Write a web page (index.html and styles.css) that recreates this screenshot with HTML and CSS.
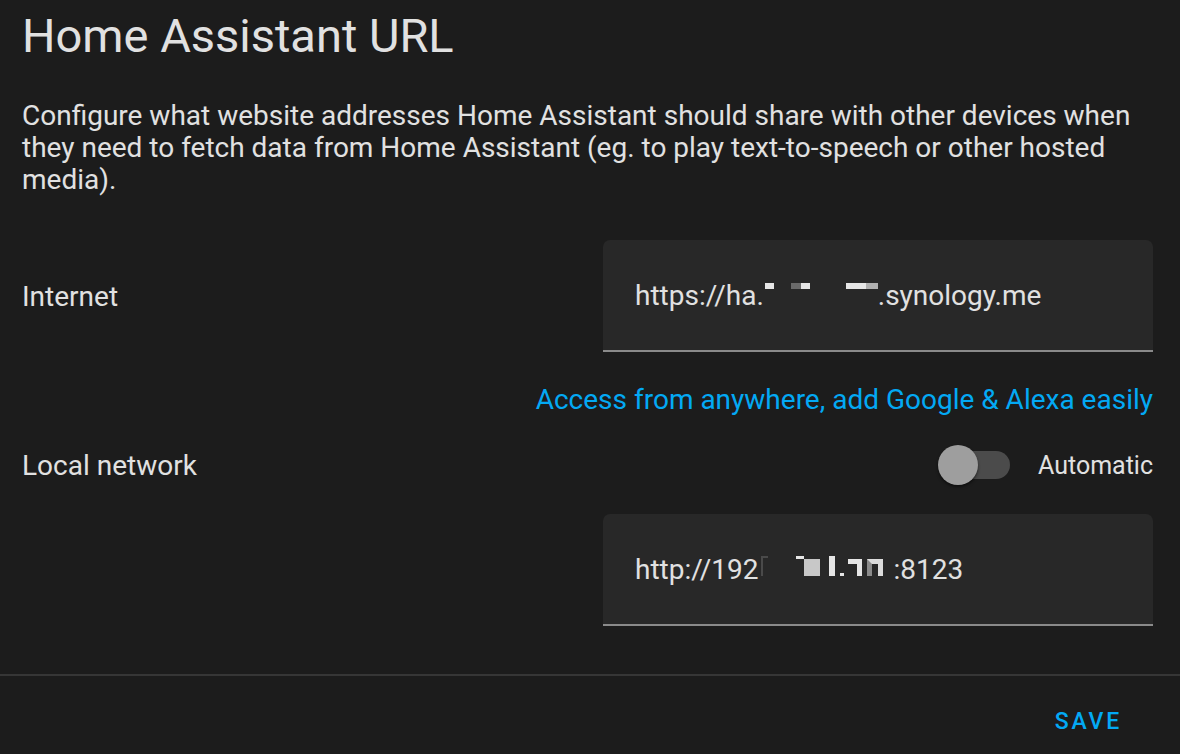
FILE: index.html
```html
<html>
<head>
    <title>Home Assistant URL</title>
    <link rel="stylesheet" href="styles.css">
</head>
<body>
    <div class="card">
        <div class="card-content">
            <h1>Home Assistant URL</h1>
            <p class="description">Configure what website addresses Home Assistant should share with other devices when they need to fetch data from Home Assistant (eg. to play text-to-speech or other hosted media).</p>

            <div class="row row-internet">
                <span class="label">Internet</span>
                <div class="field">
                    <span>https://ha.</span><span class="mask mask-external"><i class="px px-a"></i><i class="px px-b"></i><i class="px px-c"></i><i class="px px-d"></i><i class="px px-e"></i></span><span>.synology.me</span>
                </div>
            </div>

            <div class="link-line">
                <a class="cloud-link" href="#">Access from anywhere, add Google &amp; Alexa easily</a>
            </div>

            <div class="row row-local">
                <span class="label">Local network</span>
                <div class="auto">
                    <div class="switch">
                        <div class="track"></div>
                        <div class="thumb"></div>
                    </div>
                    <span class="auto-label">Automatic</span>
                </div>
            </div>

            <div class="row row-local-field">
                <div class="field">
                    <span>http://192</span><span class="mask mask-internal"><i class="px px-f"></i><i class="px px-g"></i><i class="px px-h"></i><i class="px px-i"></i><i class="px px-j"></i><i class="px px-k"></i><i class="px px-l"></i></span><span>:8123</span>
                </div>
            </div>
        </div>

        <div class="card-actions">
            <button class="save">Save</button>
        </div>
    </div>
</body>
</html>
```

FILE: styles.css
```css
body{
    margin: 0;
    background-color: #1c1c1c;
    font-family: Roboto, "Noto Sans", sans-serif;
    color: #e1e1e1;
}
.card{
    width: 1180px;
    height: 754px;
    display: flex;
    flex-direction: column;
}
.card-content{
    padding: 8px 27px 0 22px;
}
h1{
    margin: 0;
    font-size: 47px;
    font-weight: 400;
    line-height: 56px;
}
.description{
    margin: 36px 0 0;
    font-size: 28px;
    line-height: 32px;
}
.row{
    display: flex;
    justify-content: space-between;
    align-items: center;
}
.row-internet{
    margin-top: 44px;
}
.label{
    font-size: 28px;
}
.field{
    width: 550px;
    height: 112px;
    box-sizing: border-box;
    padding-left: 32px;
    display: flex;
    align-items: center;
    background-color: #282828;
    border-radius: 7px 7px 0 0;
    border-bottom: 2px solid #8a8a8a;
    font-size: 28px;
    white-space: pre;
}
.mask{
    position: relative;
    display: inline-block;
    height: 30px;
}
.mask-external{
    width: 114px;
}
.mask-internal{
    width: 135px;
}
.px{
    position: absolute;
    display: block;
}
.px-a{ left: 1px;  top: 3px; width: 9px;  height: 6px; background: #e6e6e6; }
.px-b{ left: 27px; top: 3px; width: 10px; height: 6px; background: #6a6a6a; }
.px-c{ left: 37px; top: 3px; width: 9px;  height: 6px; background: #e6e6e6; }
.px-d{ left: 82px; top: 3px; width: 20px; height: 6px; background: #e6e6e6; }
.px-e{ left: 102px; top: 3px; width: 12px; height: 6px; background: #b0b0b0; }
.px-f{ left: 2px;  top: 2px; width: 7px;  height: 20px; border-left: 2px solid #4a4a4a; border-top: 2px solid #4a4a4a; box-sizing: border-box; }
.px-g{ left: 37px; top: 2px; width: 8px;  height: 3px; background: #e6e6e6; }
.px-h{ left: 45px; top: 5px; width: 16px; height: 17px; background: #c8c8c8; }
.px-i{ left: 70px; top: 2px; width: 6px;  height: 20px; background: #e6e6e6; }
.px-j{ left: 81px; top: 19px; width: 4px; height: 3px; background: #e6e6e6; }
.px-k{ left: 89px; top: 5px; width: 14px; height: 17px; border-top: 5px solid #e6e6e6; border-right: 5px solid #e6e6e6; box-sizing: border-box; }
.px-l{ left: 108px; top: 5px; width: 16px; height: 17px; border-top: 5px solid #dcdcdc; border-left: 5px solid #8a8a8a; border-right: 5px solid #dcdcdc; box-sizing: border-box; }
.link-line{
    margin-top: 32px;
    text-align: right;
    font-size: 28px;
    line-height: 32px;
}
.cloud-link{
    color: #03a9f4;
    text-decoration: none;
}
.row-local{
    margin-top: 25px;
    height: 48px;
}
.auto{
    display: flex;
    align-items: center;
}
.switch{
    position: relative;
    width: 72px;
    height: 40px;
}
.track{
    position: absolute;
    left: 6px;
    top: 6px;
    width: 66px;
    height: 28px;
    border-radius: 14px;
    background-color: #4b4b4b;
}
.thumb{
    position: absolute;
    left: 0;
    top: 0;
    width: 40px;
    height: 40px;
    border-radius: 50%;
    background-color: #9e9e9e;
    box-shadow: 0 2px 3px rgba(0, 0, 0, 0.5);
}
.auto-label{
    margin-left: 28px;
    font-size: 25px;
}
.row-local-field{
    margin-top: 25px;
    justify-content: flex-end;
}
.card-actions{
    margin-top: 48px;
    flex: 1;
    border-top: 2px solid #363636;
    display: flex;
    justify-content: flex-end;
    align-items: center;
    padding: 12px 50px 0 0;
}
.save{
    background: none;
    border: none;
    padding: 8px;
    font-family: Roboto, "Noto Sans", sans-serif;
    font-size: 23px;
    font-weight: 500;
    letter-spacing: 2.8px;
    text-transform: uppercase;
    color: #03a9f4;
    cursor: pointer;
}
```
